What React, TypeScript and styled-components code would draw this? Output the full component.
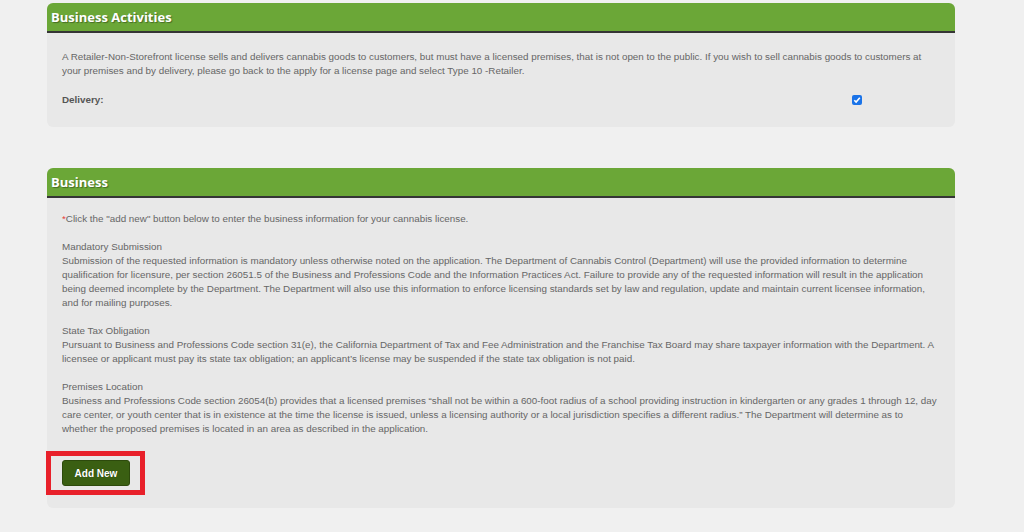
import React, { FC } from 'react';
import styled, { createGlobalStyle } from 'styled-components';

const GlobalStyle = createGlobalStyle`
  html, body {
    margin: 0;
    padding: 0;
    background: #f0f0f0;
  }
  body {
    font-family: 'Liberation Sans', Arial, sans-serif;
  }
`;

const Page = styled.div`
  display: flex;
  flex-direction: column;
  gap: 41px;
  padding: 3px 0 0 47px;
  width: 908px;
`;

const Panel = styled.section`
  display: flex;
  flex-direction: column;
  border-radius: 6px;
  background: #e8e8e8;
`;

const PanelHeader = styled.h2`
  margin: 0;
  height: 27px;
  padding: 0 4px 1px;
  display: flex;
  align-items: center;
  background: #6ba737;
  border-bottom: 2px solid #353535;
  border-radius: 6px 6px 0 0;
  color: #fff;
  font-family: 'Open Sans', sans-serif;
  font-weight: 700;
  font-size: 13px;
  text-shadow: 1px 1px 1px rgba(0, 0, 0, 0.35);
`;

interface IBody {
  top: number;
  bottom: number;
}
const PanelBody = styled.div<IBody>`
  padding: ${props => `${props.top}px 15px ${props.bottom}px 15px`};
  color: #666;
  font-size: 9.83px;
  line-height: 14px;
`;

const Para = styled.p`
  margin: 0 0 14px;
`;

const Required = styled.span`
  color: #e53935;
`;

const FieldRow = styled.div`
  display: flex;
  align-items: center;
  justify-content: space-between;
  padding-right: 78px;
  margin-top: 15px;
`;

const FieldLabel = styled.span`
  font-weight: 700;
  color: #555;
`;

const CheckBox = styled.span`
  width: 10px;
  height: 10px;
  border-radius: 2px;
  background: #1a73e8;
  display: inline-flex;
  align-items: center;
  justify-content: center;
`;

const ButtonWrap = styled.div`
  position: relative;
  margin-top: 24px;
  display: flex;
`;

const Highlight = styled.div`
  position: absolute;
  left: -16px;
  top: -9px;
  width: 99px;
  height: 44px;
  box-sizing: border-box;
  border: 5px solid #e8202a;
  pointer-events: none;
`;

const Button = styled.button`
  width: 68px;
  height: 26px;
  padding: 0;
  border: 1px solid #2d4a0c;
  border-radius: 3px;
  background: #3a5f12;
  color: #fff;
  font-family: 'Liberation Sans', Arial, sans-serif;
  font-weight: 700;
  font-size: 10px;
  text-shadow: 0 0 1px rgba(0, 0, 0, 0.4);
`;

const Check: FC = () => (
  <svg width="8" height="8" viewBox="0 0 8 8">
    <path d="M1.3 4.2 L3.1 6 L6.8 1.8" fill="none" stroke="#fff" strokeWidth="1.6" />
  </svg>
);

const App: FC = () => (
  <>
    <GlobalStyle />
    <Page>
      <Panel>
        <PanelHeader>Business Activities</PanelHeader>
        <PanelBody top={17} bottom={20}>
          <Para style={{ marginBottom: 0 }}>
            A Retailer-Non-Storefront license sells and delivers cannabis goods to customers, but must have a
            licensed premises, that is not open to the public. If you wish to sell cannabis goods to customers at
            your premises and by delivery, please go back to the apply for a license page and select Type 10 -Retailer.
          </Para>
          <FieldRow>
            <FieldLabel>Delivery:</FieldLabel>
            <CheckBox>
              <Check />
            </CheckBox>
          </FieldRow>
        </PanelBody>
      </Panel>
      <Panel>
        <PanelHeader>Business</PanelHeader>
        <PanelBody top={14} bottom={22}>
          <Para>
            <Required>*</Required>Click the "add new" button below to enter the business information for your
            cannabis license.
          </Para>
          <Para>
            Mandatory Submission
            <br />
            Submission of the requested information is mandatory unless otherwise noted on the application. The
            Department of Cannabis Control (Department) will use the provided information to determine qualification
            for licensure, per section 26051.5 of the Business and Professions Code and the Information Practices Act.
            Failure to provide any of the requested information will result in the application being deemed
            incomplete by the Department. The Department will also use this information to enforce licensing
            standards set by law and regulation, update and maintain current licensee information, and for mailing
            purposes.
          </Para>
          <Para>
            State Tax Obligation
            <br />
            Pursuant to Business and Professions Code section 31(e), the California Department of Tax and Fee
            Administration and the Franchise Tax Board may share taxpayer information with the Department. A licensee
            or applicant must pay its state tax obligation; an applicant’s license may be suspended if the state tax
            obligation is not paid.
          </Para>
          <Para style={{ marginBottom: 0 }}>
            Premises Location
            <br />
            Business and Professions Code section 26054(b) provides that a licensed premises “shall not be within a
            600-foot radius of a school providing instruction in kindergarten or any grades 1 through 12, day care
            center, or youth center that is in existence at the time the license is issued, unless a licensing
            authority or a local jurisdiction specifies a different radius.” The Department will determine as to
            whether the proposed premises is located in an area as described in the application.
          </Para>
          <ButtonWrap>
            <Button type="button">Add New</Button>
            <Highlight />
          </ButtonWrap>
        </PanelBody>
      </Panel>
    </Page>
  </>
);

export default App;
